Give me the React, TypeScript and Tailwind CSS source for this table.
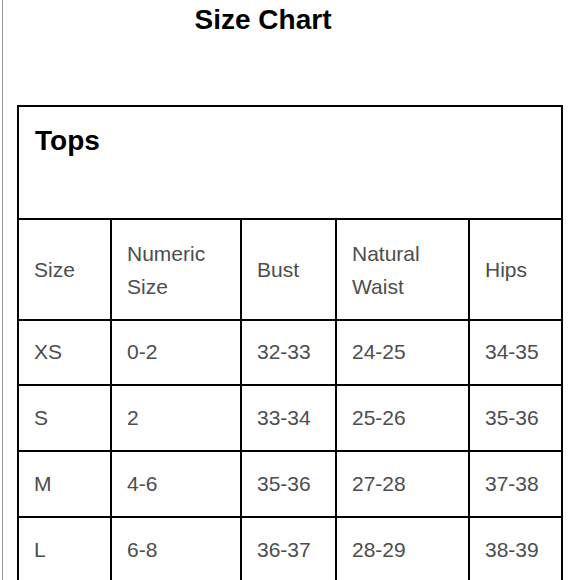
const HEADERS = ["Size", "Numeric\nSize", "Bust", "Natural\nWaist", "Hips"];

const ROWS = [
  ["XS", "0-2", "32-33", "24-25", "34-35"],
  ["S", "2", "33-34", "25-26", "35-36"],
  ["M", "4-6", "35-36", "27-28", "37-38"],
  ["L", "6-8", "36-37", "28-29", "38-39"],
];

const COL_WIDTHS = ["w-[93px]", "w-[130px]", "w-[95px]", "w-[133px]", "w-[93px]"];

export default function App() {
  return (
    <div className="h-[580px] w-[580px] overflow-hidden bg-white font-['Liberation_Sans',Arial,sans-serif]">
      <div className="ml-[2px] h-full border-l border-[#9a9a9a] pl-[14px]">
        <h1 className="w-[492px] pt-[3px] text-center text-[28px] font-bold leading-[34px] text-black">
          Size Chart
        </h1>

        {/* Tops table */}
        <table className="mt-[68px] w-[545px] table-fixed border-collapse border-2 border-black">
          <colgroup>
            {COL_WIDTHS.map((w, i) => (
              <col key={i} className={w} />
            ))}
          </colgroup>
          <tbody>
            <tr className="h-[113px]">
              <td colSpan={5} className="border-2 border-black px-[16px] pt-[18px] align-top text-[28px] font-bold leading-[32px] text-black">
                Tops
              </td>
            </tr>
            <tr className="h-[101px]">
              {HEADERS.map((h, i) => (
                <td key={i} className="whitespace-pre-line border-2 border-black px-[15px] align-middle text-[21px] leading-[33px] text-[#4d4d4d]">
                  {h}
                </td>
              ))}
            </tr>
            {ROWS.map((row, r) => (
              <tr key={r} className={r === 0 ? "h-[65px]" : "h-[66px]"}>
                {row.map((cell, i) => (
                  <td key={i} className="border-2 border-black px-[15px] pb-[2px] align-middle text-[21px] leading-[33px] text-[#4d4d4d]">
                    {cell}
                  </td>
                ))}
              </tr>
            ))}
          </tbody>
        </table>
      </div>
    </div>
  );
}
